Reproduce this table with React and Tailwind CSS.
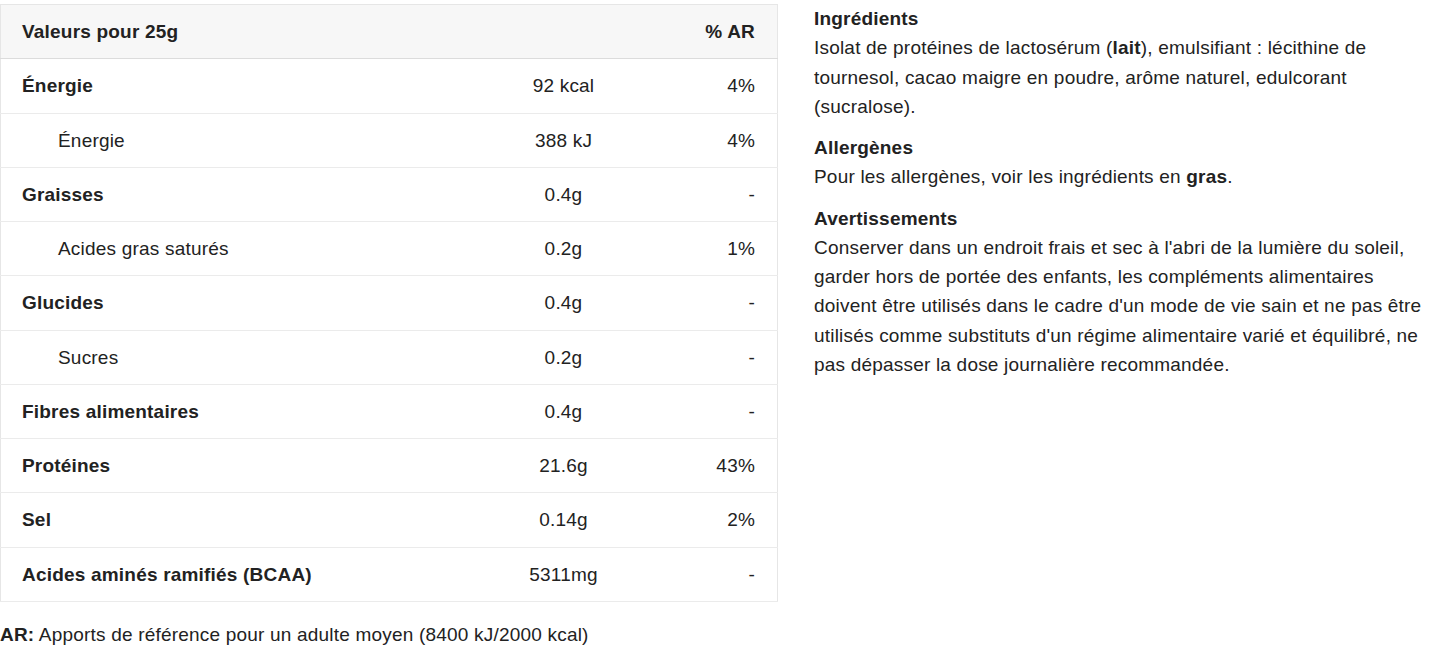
import React from 'react';

const rows = [
    { name: "Énergie", value: "92 kcal", ar: "4%", bold: true },
    { name: "Énergie", value: "388 kJ", ar: "4%", bold: false },
    { name: "Graisses", value: "0.4g", ar: "-", bold: true },
    { name: "Acides gras saturés", value: "0.2g", ar: "1%", bold: false },
    { name: "Glucides", value: "0.4g", ar: "-", bold: true },
    { name: "Sucres", value: "0.2g", ar: "-", bold: false },
    { name: "Fibres alimentaires", value: "0.4g", ar: "-", bold: true },
    { name: "Protéines", value: "21.6g", ar: "43%", bold: true },
    { name: "Sel", value: "0.14g", ar: "2%", bold: true },
    { name: "Acides aminés ramifiés (BCAA)", value: "5311mg", ar: "-", bold: true },
]

export default function App() {
    return (
        <div className="flex gap-[36px] pt-[4px] text-[19px] tracking-[0.2px] leading-[29.25px] text-[#222]" style={{ fontFamily: '"Liberation Sans", Arial, sans-serif' }}>
            <div className="w-[778px] shrink-0">
                <table className="w-full table-fixed border-collapse border border-[#e6e6e6]">
                    <colgroup>
                        <col className="w-[470px]" />
                        <col className="w-[186px]" />
                        <col />
                    </colgroup>
                    <thead>
                        <tr className="bg-[#f7f7f7] border-b border-[#dcdcdc]">
                            <th className="text-left font-bold pl-[21px] py-3">Valeurs pour 25g</th>
                            <th></th>
                            <th className="text-right font-bold pr-[22px] py-3">% AR</th>
                        </tr>
                    </thead>
                    <tbody>
                        {rows.map((row, i) => (
                            <tr key={i} className="border-b border-[#ebebeb]">
                                <td className={`py-3 ${row.bold ? "font-bold pl-[21px]" : "pl-[57px]"}`}>{row.name}</td>
                                <td className="py-3 text-center">{row.value}</td>
                                <td className="py-3 pr-[22px] text-right">{row.ar}</td>
                            </tr>
                        ))}
                    </tbody>
                </table>
                <p className="mt-[18px]"><span className="font-bold">AR:</span> Apports de référence pour un adulte moyen (8400 kJ/2000 kcal)</p>
            </div>

            <div className="flex-1 pr-[8px]">
                <div className="mb-[12px]">
                    <h3 className="font-bold">Ingrédients</h3>
                    <p>Isolat de protéines de lactosérum (<span className="font-bold">lait</span>), emulsifiant : lécithine de tournesol, cacao maigre en poudre, arôme naturel, edulcorant (sucralose).</p>
                </div>
                <div className="mb-[12px]">
                    <h3 className="font-bold">Allergènes</h3>
                    <p>Pour les allergènes, voir les ingrédients en <span className="font-bold">gras</span>.</p>
                </div>
                <div>
                    <h3 className="font-bold">Avertissements</h3>
                    <p>Conserver dans un endroit frais et sec à l'abri de la lumière du soleil, garder hors de portée des enfants, les compléments alimentaires doivent être utilisés dans le cadre d'un mode de vie sain et ne pas être utilisés comme substituts d'un régime alimentaire varié et équilibré, ne pas dépasser la dose journalière recommandée.</p>
                </div>
            </div>
        </div>
    )
}
